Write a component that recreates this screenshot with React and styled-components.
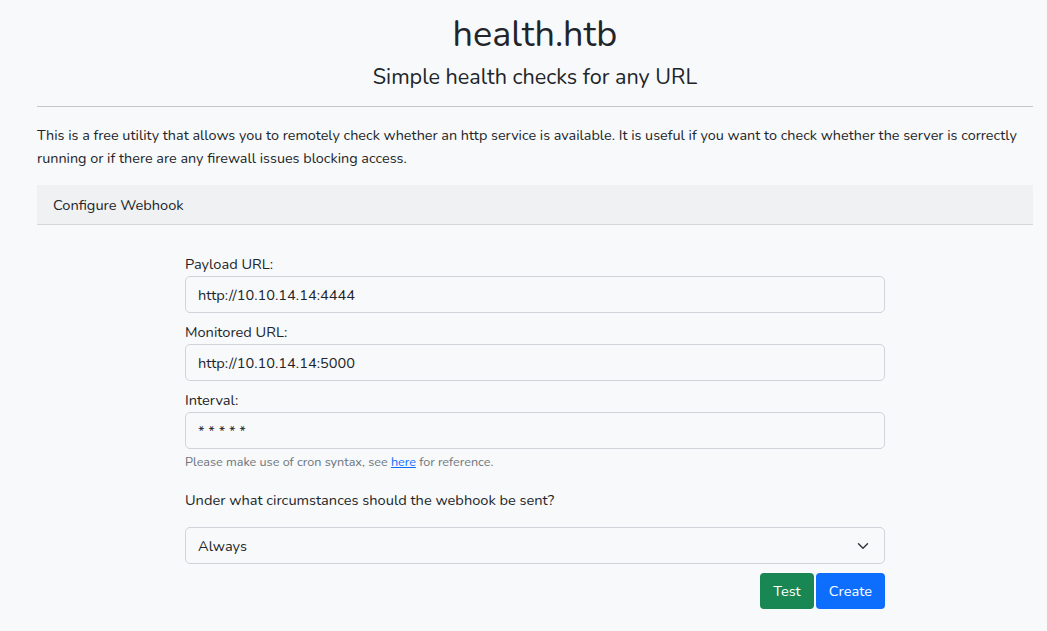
import React from 'react';
import styled, { createGlobalStyle } from 'styled-components';

const GlobalStyle = createGlobalStyle`
  html, body {
    margin: 0;
    padding: 0;
    background: #f8f9fa;
    color: #212529;
    font-family: "Nunito", "Lato", "Open Sans", sans-serif;
  }
`;

const Page = styled.div`
  padding: 0 14px 0 37px;
`;

const Header = styled.header`
  display: flex;
  flex-direction: column;
  align-items: center;
  padding-top: 13px;
  border-bottom: 1px solid #c4c6c8;
  padding-bottom: 14px;
`;

const Title = styled.h1`
  margin: 0;
  font-size: 36px;
  font-weight: 400;
  line-height: 44px;
`;

const Subtitle = styled.h4`
  margin: 5px 0 0;
  font-size: 21.6px;
  font-weight: 400;
  line-height: 30px;
`;

const Intro = styled.p`
  margin: 17px 0 15px;
  font-size: 14.4px;
  line-height: 23px;
`;

const CardHeader = styled.div`
  background: #f0f1f2;
  border-bottom: 1px solid #d5d7d9;
  padding: 0 16px;
  height: 39px;
  display: flex;
  align-items: center;
  font-size: 14.6px;
`;

const Form = styled.form`
  width: 700px;
  margin: 29px auto 0;
  display: flex;
  flex-direction: column;
`;

const Label = styled.label`
  font-size: 14.6px;
  line-height: 20px;
  margin-bottom: 2px;
  margin-top: ${p => p.$first ? '0' : '9px'};
`;

const Input = styled.div`
  height: 37px;
  box-sizing: border-box;
  border: 1px solid #ced4da;
  border-radius: 5px;
  background: #f8f9fa;
  display: flex;
  align-items: center;
  padding: 0 ${p => p.$select ? 15 : 12}px 0 12px;
  font-size: 14.6px;
  justify-content: space-between;
`;

const Help = styled.div`
  font-size: 12.6px;
  color: #6c757d;
  margin-top: 5px;
  line-height: 16px;

  a {
    color: #0d6efd;
  }
`;

const Question = styled.div`
  font-size: 14.6px;
  margin: 20px 0 17px;
  line-height: 20px;
`;

const Actions = styled.div`
  display: flex;
  justify-content: flex-end;
  gap: 2px;
  margin-top: 9px;
`;

const Button = styled.button`
  height: 36px;
  border: none;
  border-radius: 4px;
  color: #fff;
  font-family: inherit;
  font-size: 14.6px;
  padding: 0 ${p => p.$pad}px;
  background: ${p => p.$color};
`;

export default function App() {
  return (
    <Page>
      <GlobalStyle />
      <Header>
        <Title>health.htb</Title>
        <Subtitle>Simple health checks for any URL</Subtitle>
      </Header>
      <Intro>
        This is a free utility that allows you to remotely check whether an http service is available. It is useful if you want to check whether the server is correctly running or if there are any firewall issues blocking access.
      </Intro>
      <CardHeader>Configure Webhook</CardHeader>
      <Form>
        <Label $first>Payload URL:</Label>
        <Input>http://10.10.14.14:4444</Input>
        <Label>Monitored URL:</Label>
        <Input>http://10.10.14.14:5000</Input>
        <Label>Interval:</Label>
        <Input>* * * * *</Input>
        <Help>Please make use of cron syntax, see <a href="#">here</a> for reference.</Help>
        <Question>Under what circumstances should the webhook be sent?</Question>
        <Input $select>
          Always
          <svg width="12" height="12" viewBox="0 0 16 16" fill="none" stroke="#343a40" strokeWidth="2" strokeLinecap="round" strokeLinejoin="round">
            <path d="M2 5l6 6 6-6" />
          </svg>
        </Input>
        <Actions>
          <Button type="button" $color="#198754" $pad={13}>Test</Button>
          <Button type="button" $color="#0d6efd" $pad={13}>Create</Button>
        </Actions>
      </Form>
    </Page>
  );
}
